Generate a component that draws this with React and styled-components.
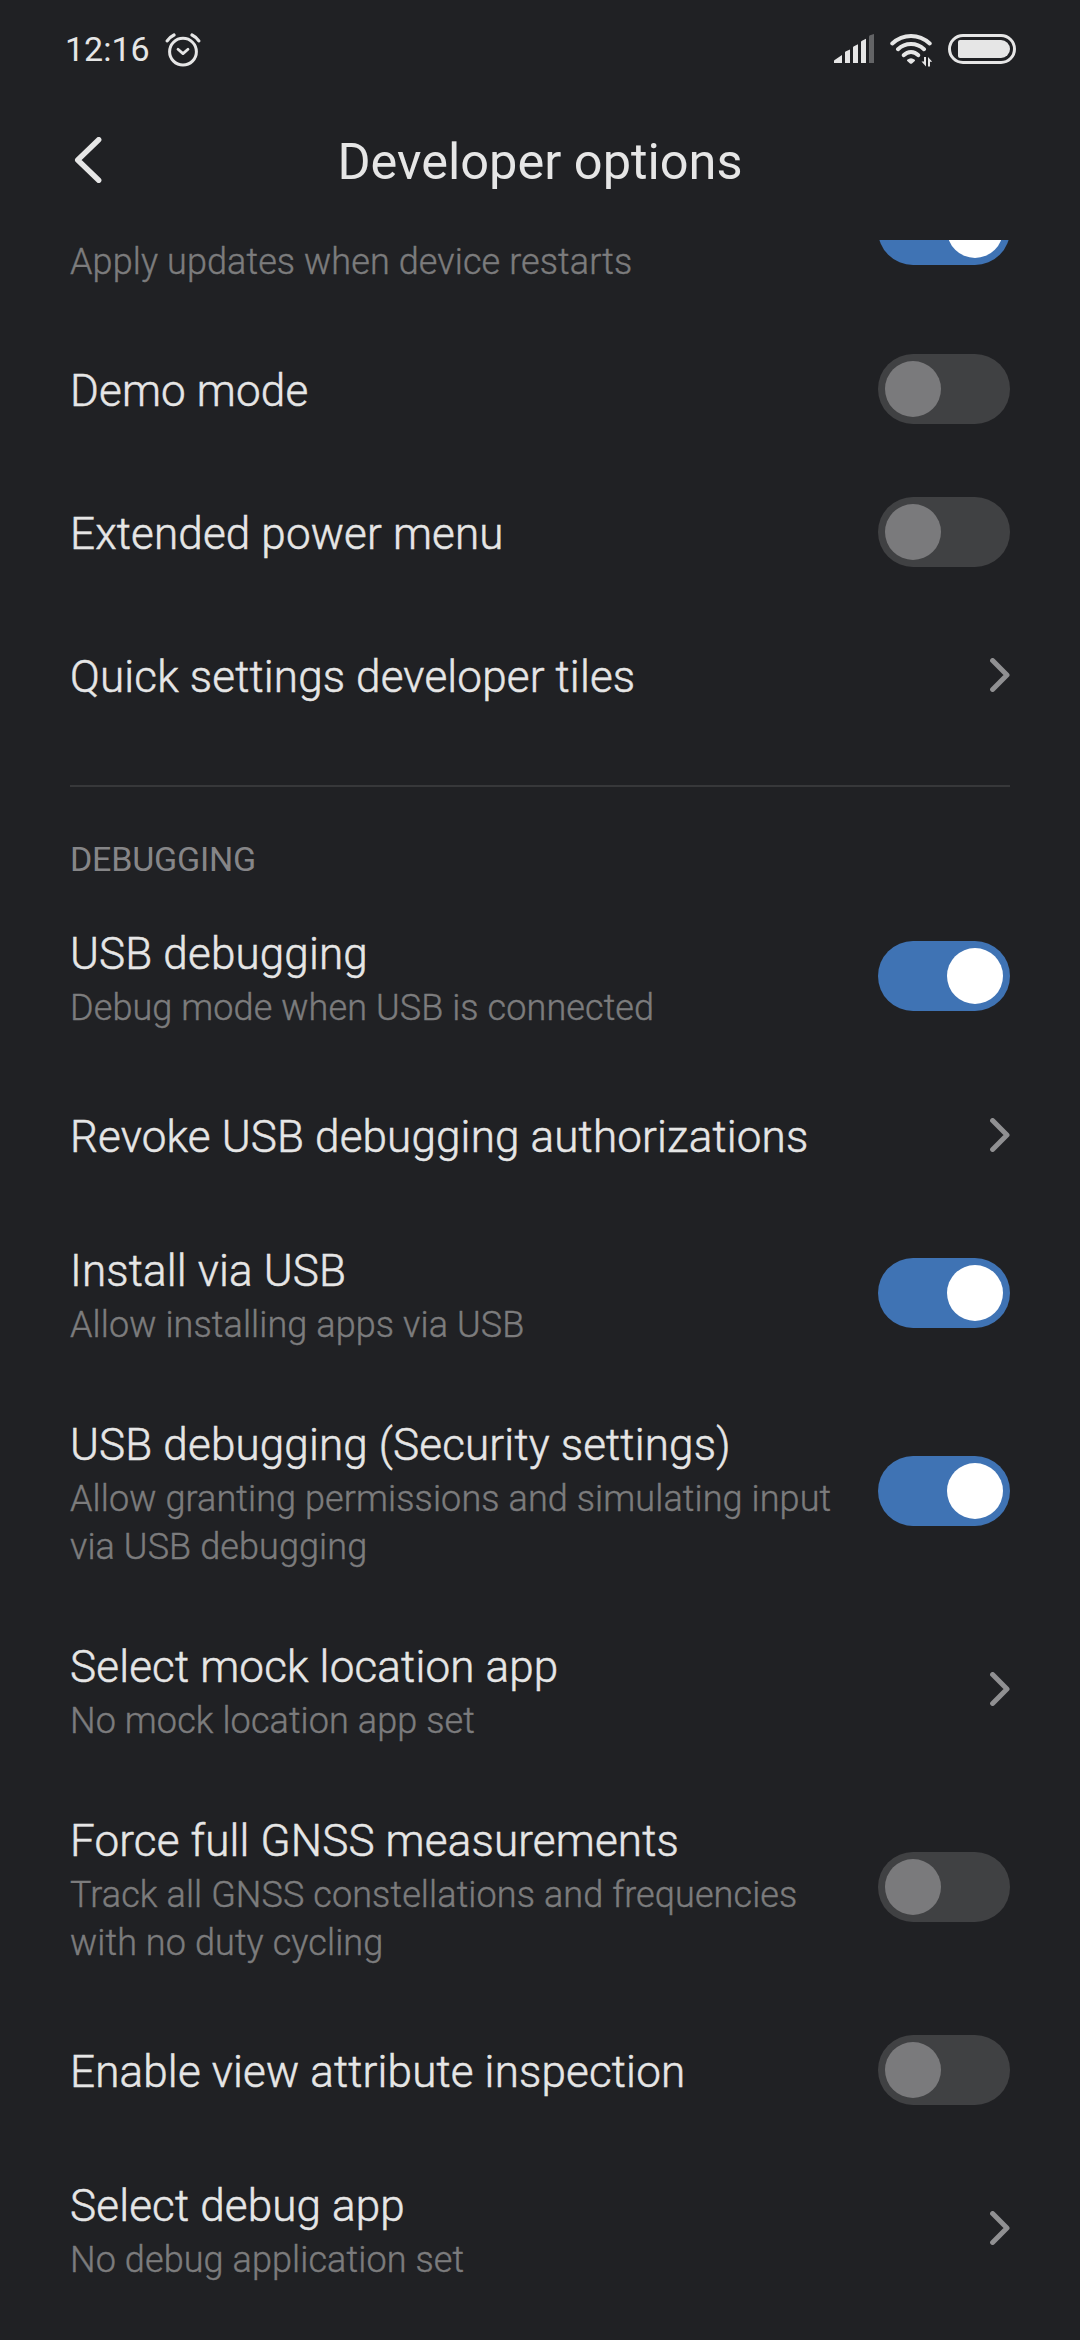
import { useState } from "react";
import styled, { createGlobalStyle } from "styled-components";

const general = [
  {
    id: "updates",
    summary: "Apply updates when device restarts",
    type: "switch",
    on: true,
  },
  { id: "demo", title: "Demo mode", type: "switch", on: false },
  { id: "power", title: "Extended power menu", type: "switch", on: false },
  { id: "tiles", title: "Quick settings developer tiles", type: "link" },
];

const debugging = [
  {
    id: "usb",
    title: "USB debugging",
    summary: "Debug mode when USB is connected",
    type: "switch",
    on: true,
  },
  { id: "revoke", title: "Revoke USB debugging authorizations", type: "link" },
  {
    id: "install",
    title: "Install via USB",
    summary: "Allow installing apps via USB",
    type: "switch",
    on: true,
  },
  {
    id: "security",
    title: "USB debugging (Security settings)",
    summary: "Allow granting permissions and simulating input via USB debugging",
    type: "switch",
    on: true,
  },
  {
    id: "mock",
    title: "Select mock location app",
    summary: "No mock location app set",
    type: "link",
  },
  {
    id: "gnss",
    title: "Force full GNSS measurements",
    summary: "Track all GNSS constellations and frequencies with no duty cycling",
    type: "switch",
    on: false,
  },
  {
    id: "inspect",
    title: "Enable view attribute inspection",
    type: "switch",
    on: false,
  },
  {
    id: "debugapp",
    title: "Select debug app",
    summary: "No debug application set",
    type: "link",
  },
];

const AlarmIcon = () => (
  <svg width="36" height="40" viewBox="0 -4 36 40" fill="none" stroke="#e6e6e6">
    <circle cx="18" cy="18.700" r="13.400" strokeWidth="3" />
    <path
      d="M13 16.300 18 20.600l5-4.300"
      strokeWidth="2.800"
      strokeLinecap="round"
      strokeLinejoin="round"
    />
    <path
      d="M2.200 7.900Q4.800 4 9 2M27 2q4.200 2 6.800 5.900"
      strokeWidth="3.200"
      strokeLinecap="round"
    />
  </svg>
);

const SignalIcon = () => (
  <svg width="40" height="30" viewBox="0 0 40 30" fill="#e6e6e6">
    <path d="M0 29v-2q0-.8 1-1.300L8 21v8z" />
    <path d="M11 29V18.300q0-.8 1-1.100L16 15.500V29z" />
    <path d="M19 29V13.500q0-.8 1-1.200l4-2V29z" />
    <path d="M27 29V8q0-.8 1-1.300l4-2V29z" />
    <path d="M35 29V2.500q0-.8 1-1.300L40 0v29z" fill="#636466" />
  </svg>
);

const WifiIcon = () => (
  <svg width="42" height="36" viewBox="0 0 42 36" fill="none" stroke="#e6e6e6">
    <path
      d="M2.300 12.500Q10.500 5 21 5t18.700 7.500M8 18.200Q13.500 13 21 13t13 5.200M13.800 24.200q3-3.200 7.200-3.200t7.200 3.200"
      strokeWidth="4"
      strokeLinecap="round"
    />
    <path
      d="M17.200 28.700q3.800-3 7.600 0 .5.600 0 1.200L22 32.500q-1 .7-2 0l-2.800-2.600q-.5-.6 0-1.200z"
      fill="#e6e6e6"
      stroke="none"
    />
    <path
      d="M36 26v9.500L31.500 30.600H34V26zM38 35.500V26l4.300 4.800H40v4.700z"
      fill="#e6e6e6"
      stroke="none"
    />
  </svg>
);

const BatteryIcon = () => (
  <svg width="68" height="30" viewBox="0 0 68 30">
    <rect
      x="1.500"
      y="1.500"
      width="65"
      height="27"
      rx="13.500"
      fill="none"
      stroke="#e6e6e6"
      strokeWidth="3"
    />
    <path
      d="M12 6h41a9 9 0 0 1 0 18H12a2 2 0 0 1-2-2V8a2 2 0 0 1 2-2z"
      fill="#e6e6e6"
    />
  </svg>
);

const BackIcon = () => (
  <svg width="28" height="46" viewBox="0 0 28 46" fill="none">
    <path
      d="M24.700 2.700 3.700 23l21 20.300"
      stroke="#e6e6e6"
      strokeWidth="5.400"
      strokeLinecap="round"
      strokeLinejoin="round"
    />
  </svg>
);

const ChevronIcon = () => (
  <svg width="20" height="34" viewBox="0 0 20 34" fill="none">
    <path
      d="M2.600 2.600 17 17 2.600 31.400"
      stroke="#909092"
      strokeWidth="5"
      strokeLinecap="round"
      strokeLinejoin="round"
    />
  </svg>
);

const Setting = ({ item }) => {
  const [on, setOn] = useState(item.on);

  return (
    <Row $tall={!!item.summary} onClick={() => setOn(!on)}>
      <RowText>
        <RowTitle>{item.title}</RowTitle>
        {item.summary && <Summary>{item.summary}</Summary>}
      </RowText>
      {item.type === "switch" ? (
        <Switch $on={on} role="switch" aria-checked={on}>
          <Thumb $on={on} />
        </Switch>
      ) : (
        <ChevronIcon />
      )}
    </Row>
  );
};

export default function App() {
  return (
    <>
      <GlobalStyle />
      <Screen>
        <StatusBar>
          <Clock>12:16</Clock>
          <AlarmIcon />
          <StatusIcons>
            <SignalIcon />
            <WifiIcon />
            <BatteryIcon />
          </StatusIcons>
        </StatusBar>
        <Header>
          <BackButton aria-label="Back">
            <BackIcon />
          </BackButton>
          <HeaderTitle>Developer options</HeaderTitle>
        </Header>
        <ScrollArea>
          <List>
            {general.map((item) => (
              <Setting key={item.id} item={item} />
            ))}
            <Divider />
            <SectionTitle>DEBUGGING</SectionTitle>
            {debugging.map((item) => (
              <Setting key={item.id} item={item} />
            ))}
          </List>
        </ScrollArea>
      </Screen>
    </>
  );
}

const GlobalStyle = createGlobalStyle`
  * {
    box-sizing: border-box;
  }
  body {
    margin: 0;
    background: #202124;
    font-family: Roboto, "Noto Sans", sans-serif;
  }
  svg {
    display: block;
    flex-shrink: 0;
  }
`;

const Screen = styled.div`
  display: flex;
  flex-direction: column;
  width: 1080px;
  height: 2340px;
  overflow: hidden;
  background: #202124;
  color: #e6e6e6;
`;

const StatusBar = styled.div`
  display: flex;
  align-items: center;
  height: 100px;
  padding: 0 64px 2px 65px;
`;

const Clock = styled.span`
  width: 100px;
  font-size: 34px;
  line-height: 40px;
`;

const StatusIcons = styled.div`
  display: flex;
  align-items: center;
  gap: 16px;
  margin-left: auto;
`;

const Header = styled.header`
  display: grid;
  grid-template-columns: 66px 1fr 70px;
  align-items: center;
  height: 140px;
  padding: 0 70px 20px 74px;
`;

const BackButton = styled.button`
  padding: 0;
  border: 0;
  background: none;
`;

const HeaderTitle = styled.h1`
  margin: 0;
  padding-top: 4px;
  font-size: 50.5px;
  font-weight: 400;
  line-height: 60px;
  text-align: center;
`;

const ScrollArea = styled.main`
  flex: 1;
  overflow: hidden;
`;

/* the list is scrolled past most of its first row */
const List = styled.div`
  margin-top: -97px;
  padding: 0 70px;
`;

const Row = styled.div`
  display: flex;
  align-items: center;
  justify-content: space-between;
  min-height: 143px;
  padding: ${(props) => (props.$tall ? "31px 0" : "0")};
`;

const RowText = styled.div`
  width: 770px;
  padding-top: 5px;
`;

const RowTitle = styled.div`
  min-height: 59px;
  font-size: 44px;
  font-weight: 300;
  letter-spacing: 0.16px;
  line-height: 59px;
  -webkit-text-stroke: 0.5px #e6e6e6;
`;

const Summary = styled.div`
  font-size: 36px;
  font-weight: 300;
  letter-spacing: 0.1px;
  line-height: 48px;
  color: #7c7c7d;
  -webkit-text-stroke: 0.4px #7c7c7d;
`;

const Switch = styled.div`
  display: flex;
  align-items: center;
  justify-content: ${(props) => (props.$on ? "flex-end" : "flex-start")};
  flex-shrink: 0;
  width: 132px;
  height: 70px;
  padding: 0 7px;
  border-radius: 35px;
  background: ${(props) => (props.$on ? "#3f73b4" : "#404143")};
`;

const Thumb = styled.div`
  width: 56px;
  height: 56px;
  border-radius: 50%;
  background: ${(props) => (props.$on ? "#fff" : "#7a7a7c")};
`;

const Divider = styled.hr`
  height: 2px;
  margin: 39px 0 0;
  border: 0;
  background: #37383a;
`;

const SectionTitle = styled.h2`
  height: 102px;
  margin: 0;
  padding-top: 52px;
  font-size: 34px;
  font-weight: 400;
  letter-spacing: -0.2px;
  line-height: 40px;
  color: #868688;
`;
